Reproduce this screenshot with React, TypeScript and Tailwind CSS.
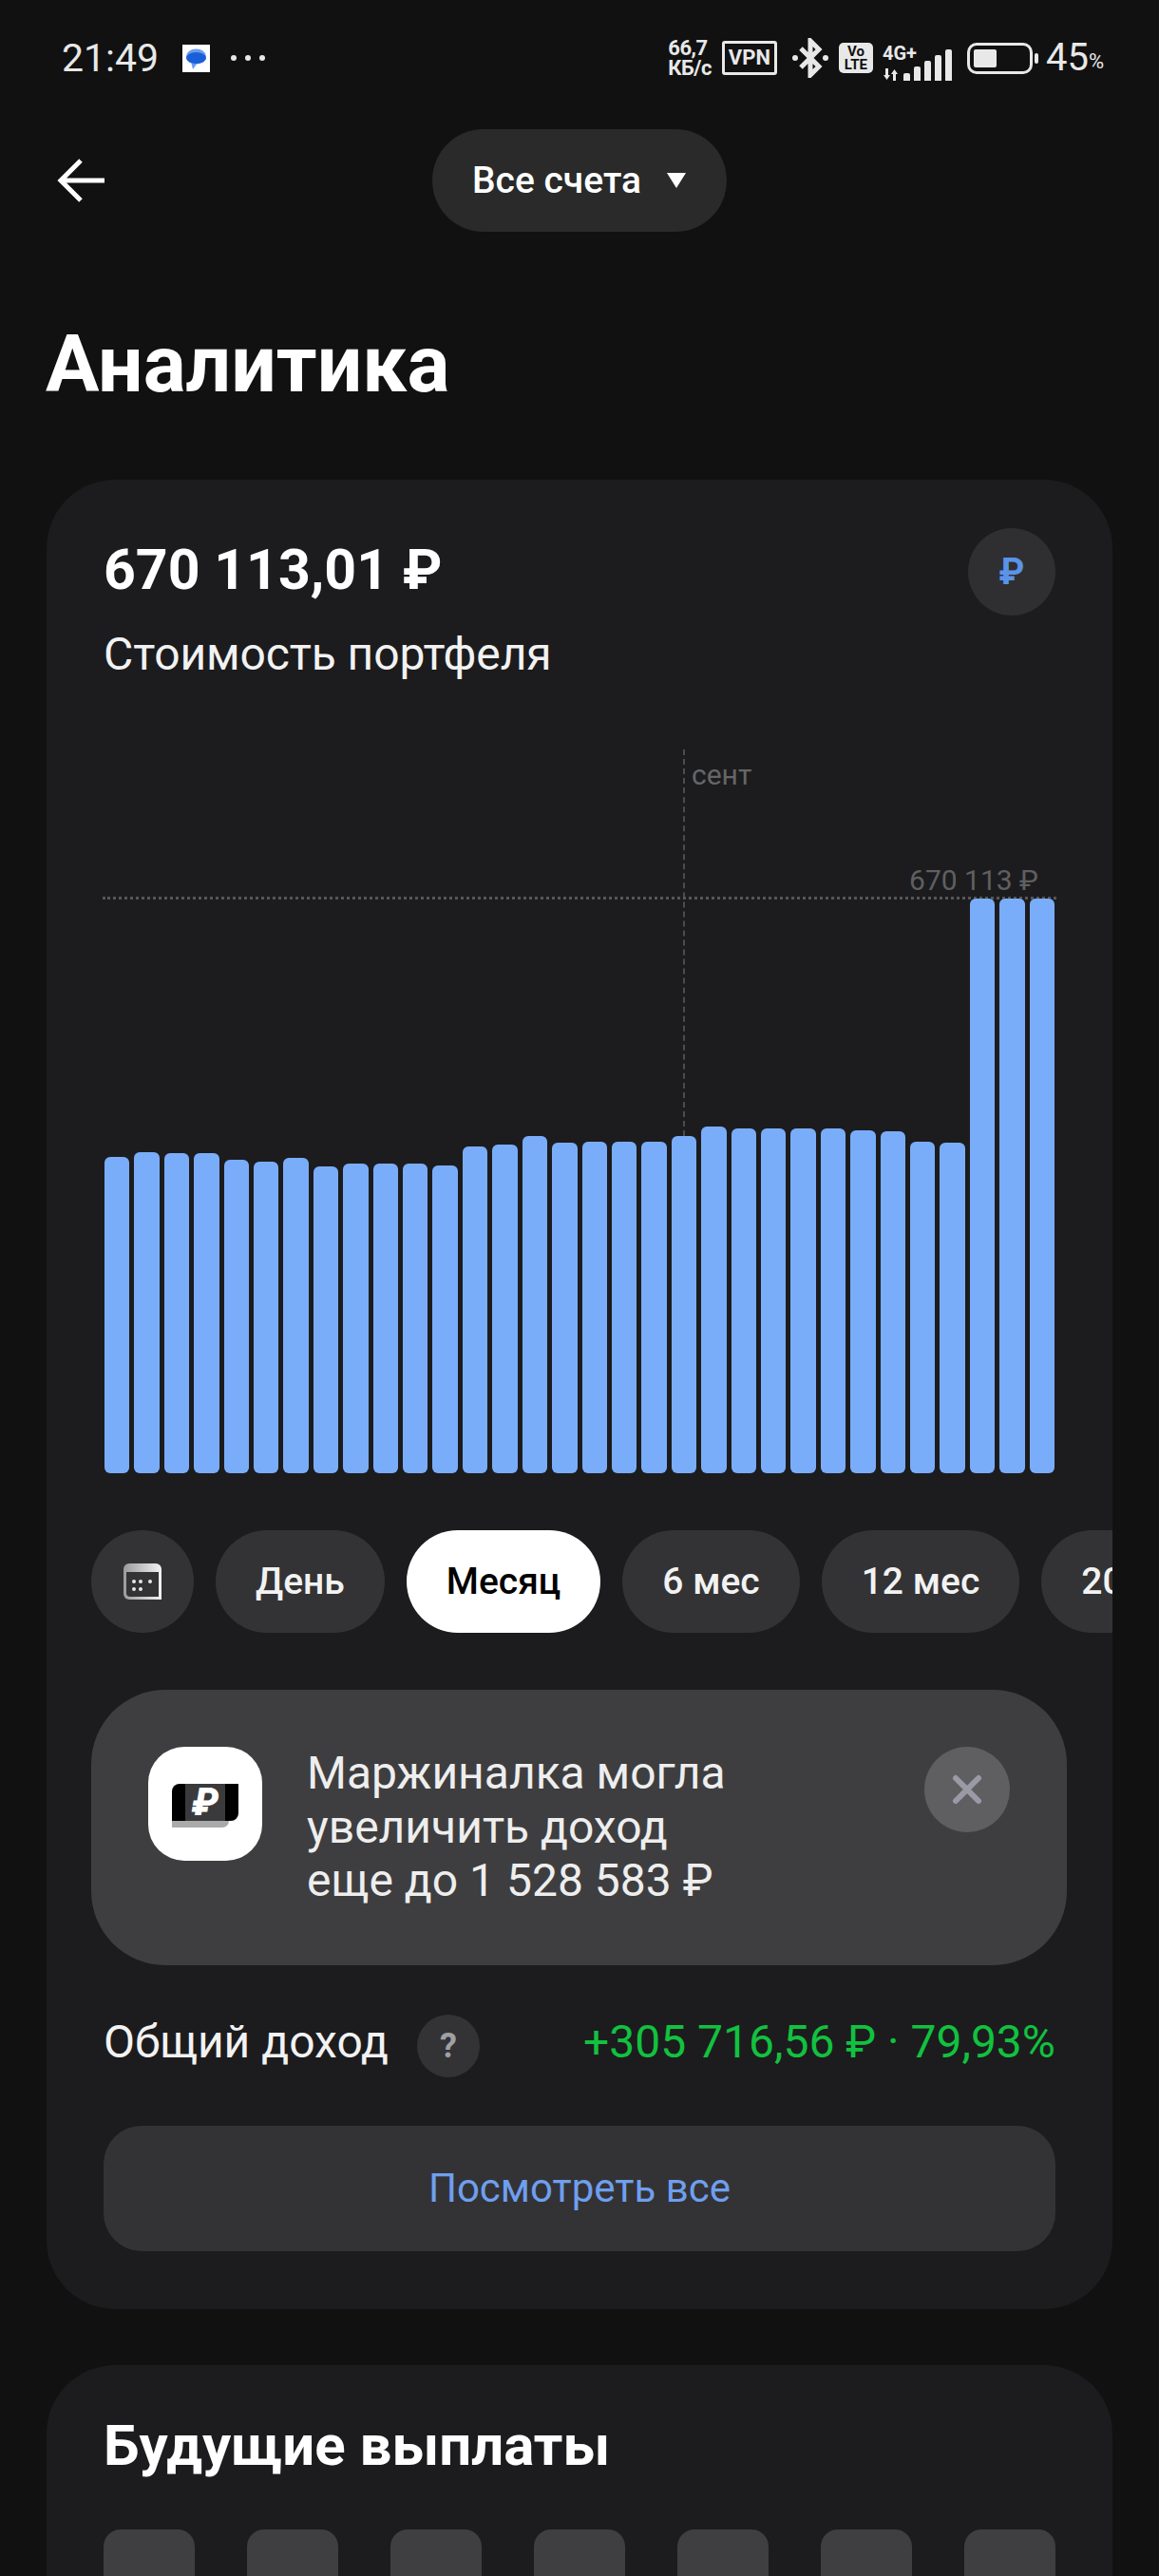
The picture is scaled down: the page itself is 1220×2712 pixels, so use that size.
import React from 'react';

const barTops = [
  1218, 1213, 1214, 1214, 1221, 1223, 1219, 1228, 1225, 1225, 1225, 1227, 1207, 1205, 1196, 1203,
  1202, 1202, 1202, 1196, 1186, 1188, 1188, 1188, 1188, 1190, 1191, 1202, 1203, 946, 946, 946,
];
const chartBottom = 1551;

const periods = ['День', 'Месяц', '6 мес', '12 мес', '2025'];
const payouts = [0, 1, 2, 3, 4, 5, 6];

// Статус-бар
const StatusBar = () => (
  <div className="h-[122px] flex items-center pl-[65px] pr-[58px] text-[#e8e8e8]">
    <span className="text-[41px] leading-none">21:49</span>
    <svg width="29" height="29" viewBox="0 0 29 29" className="ml-[25px]">
      <rect width="29" height="29" fill="#fff" />
      <ellipse cx="14.5" cy="12.5" rx="10.5" ry="8" fill="#6b9cf0" />
      <path d="M9 18l2 8 5-7z" fill="#6b9cf0" />
      <ellipse cx="14.5" cy="14" rx="10.5" ry="6" fill="#1a5fd8" />
    </svg>
    <div className="flex gap-[9px] ml-[22px]">
      <div className="w-[6px] h-[6px] rounded-full bg-[#e8e8e8]" />
      <div className="w-[6px] h-[6px] rounded-full bg-[#e8e8e8]" />
      <div className="w-[6px] h-[6px] rounded-full bg-[#e8e8e8]" />
    </div>
    <div className="ml-auto flex items-center">
      <div className="flex flex-col text-[22px] font-bold leading-[21px] tracking-[-0.5px]">
        <span>66,7</span>
        <span>КБ/с</span>
      </div>
      <div className="ml-[11px] w-[58px] h-[36px] rounded-[3px] border-[3px] border-[#e8e8e8] flex items-center justify-center text-[22px] font-bold leading-none">
        VPN
      </div>
      <svg width="38" height="42" viewBox="0 0 38 42" className="ml-[16px]" fill="none" stroke="#e8e8e8" strokeWidth="5">
        <path d="M9 11l19 19-9 9V3l9 9L9 31" />
        <circle cx="3" cy="21" r="3" fill="#e8e8e8" stroke="none" />
        <circle cx="35" cy="21" r="3" fill="#e8e8e8" stroke="none" />
      </svg>
      <div className="ml-[11px] w-[36px] h-[32px] rounded-[5px] bg-[#e8e8e8] flex flex-col items-center justify-center text-[#111] text-[15px] font-bold leading-[14px]">
        <span>Vo</span>
        <span>LTE</span>
      </div>
      <div className="ml-[10px] relative w-[73px] h-[36px] self-end mb-[-3px]">
        <span className="absolute left-0 top-[-3px] text-[20px] font-bold leading-none">4G+</span>
        <svg width="20" height="13" viewBox="0 0 20 13" className="absolute left-0 bottom-0" fill="#e8e8e8">
          <path d="M3 0h3v7h2l-3.5 5L1 7h2zM14 13h-3V6H9l3.5-5L16 6h-2z" />
        </svg>
        <div className="absolute right-0 bottom-0 flex items-end gap-[4px]">
          <div className="w-[7px] h-[8px] rounded-t-[2px] bg-[#e8e8e8]" />
          <div className="w-[7px] h-[15px] rounded-t-[2px] bg-[#e8e8e8]" />
          <div className="w-[7px] h-[21px] rounded-t-[2px] bg-[#e8e8e8]" />
          <div className="w-[7px] h-[27px] rounded-t-[2px] bg-[#e8e8e8]" />
          <div className="w-[7px] h-[33px] rounded-t-[2px] bg-[#e8e8e8]" />
        </div>
      </div>
      <div className="ml-[16px] w-[69px] h-[33px] rounded-[10px] border-[3px] border-[#e8e8e8] p-[4px]">
        <div className="w-[24px] h-full rounded-[2px] bg-[#e8e8e8]" />
      </div>
      <div className="ml-[2px] w-[4px] h-[11px] rounded-[2px] bg-[#e8e8e8]" />
      <span className="ml-[8px] text-[40px] leading-none">45</span>
      <span className="text-[22px] leading-none self-end mb-[6px]">%</span>
    </div>
  </div>
);

const Nav = () => (
  <div className="mt-[14px] h-[108px] grid grid-cols-[1fr_auto_1fr] items-center">
    <div className="pl-[60px]">
      <svg width="50" height="46" viewBox="0 0 50 46" fill="none" stroke="#fff" strokeWidth="5">
        <path d="M25 2L4 23l21 21M4 23h46" />
      </svg>
    </div>
    <div className="w-[310px] h-[108px] rounded-full bg-[#2a2a2b] flex items-center justify-center gap-[26px]">
      <span className="text-white text-[39px] font-medium leading-none">Все счета</span>
      <svg width="22" height="18" viewBox="0 0 22 18" fill="#fff">
        <path d="M1 1h20L11 17z" />
      </svg>
    </div>
    <div />
  </div>
);

const Chart = () => (
  <div className="relative mx-[61px] mt-[72px] h-[762px]">
    <div className="absolute left-[609px] top-0 bottom-[355px] border-l-2 border-dashed border-[#4c4c4e]" />
    <span className="absolute left-[618px] top-[5px] text-[#666] text-[30px] leading-[44px]">сент</span>
    <span className="absolute right-[17px] top-[119px] text-[#5f5f61] text-[30px] leading-[38px]">670 113 ₽</span>
    <div className="absolute left-[-2px] right-[-2px] top-[155px] border-t-[3px] border-dotted border-[#565658]" />
    <div className="absolute inset-0 flex items-end gap-[5px]">
      {barTops.map((top, i) => (
        <div
          key={i}
          className="flex-1 rounded-[6px] bg-[#7aadf9]"
          style={{ height: chartBottom - top }}
        />
      ))}
    </div>
  </div>
);

const Periods = () => (
  <div className="mt-[60px] pl-[47px] flex gap-[23px] overflow-hidden">
    <div className="w-[108px] h-[108px] shrink-0 rounded-full bg-[#333335] flex items-center justify-center">
      <svg width="40" height="38" viewBox="0 0 40 38">
        <defs>
          <linearGradient id="calTop" x1="0" x2="1" y1="0" y2="0">
            <stop offset="0" stopColor="#9a9a9a" />
            <stop offset="1" stopColor="#f2f2f2" />
          </linearGradient>
        </defs>
        <path d="M6 0h28a6 6 0 0 1 6 6v32H6a6 6 0 0 1-6-6V6a6 6 0 0 1 6-6z" fill="url(#calTop)" />
        <path d="M3 9h34v26H7a4 4 0 0 1-4-4z" fill="#333335" />
        <g fill="#e8e8e8">
          <circle cx="11" cy="19" r="2" />
          <circle cx="18" cy="19" r="2" />
          <circle cx="28" cy="19" r="2" />
          <circle cx="11" cy="27" r="2" />
          <circle cx="18" cy="27" r="2" />
        </g>
      </svg>
    </div>
    {periods.map((p) => (
      <div
        key={p}
        className={`h-[108px] shrink-0 px-[42px] rounded-full flex items-center text-[39px] font-medium leading-none ${p === 'Месяц' ? 'bg-white text-black' : 'bg-[#333335] text-[#f2f2f2]'}`}
      >
        {p}
      </div>
    ))}
  </div>
);

const Banner = () => (
  <div className="mt-[60px] ml-[47px] mr-[48px] h-[290px] rounded-[78px] bg-[#3e3e40] flex pl-[60px] pr-[60px] pt-[60px]">
    <svg width="120" height="120" viewBox="0 0 120 120" className="shrink-0">
      <rect width="120" height="120" rx="38" fill="#fff" />
      <path d="M25 70h60v8a7 7 0 0 1-7 7H25z" fill="#aaa" />
      <path d="M33 39h62v31a8 8 0 0 1-8 8H25V47a8 8 0 0 1 8-8z" fill="#000" />
      <rect x="39" y="39" width="42" height="39" fill="#3a3a3c" />
      <text x="60" y="72" textAnchor="middle" fill="#fff" fontSize="40" fontWeight="900" fontStyle="italic" fontFamily="Roboto">₽</text>
    </svg>
    <div className="ml-[47px] flex-1 text-[48px] leading-[56.5px] text-[#eeeeee]">
      <div>Маржиналка могла</div>
      <div>увеличить доход</div>
      <div>еще до 1 528 583 ₽</div>
    </div>
    <div className="w-[90px] h-[90px] shrink-0 rounded-full bg-[#5f5f61] flex items-center justify-center">
      <svg width="32" height="32" viewBox="0 0 32 32" stroke="#9a9aa6" strokeWidth="6" strokeLinecap="round">
        <path d="M4 4l24 24M28 4L4 28" />
      </svg>
    </div>
  </div>
);

export default function App() {
  return (
    <div className="w-[1220px] h-[2712px] overflow-hidden bg-[#111112] font-['Roboto',sans-serif]">
      <StatusBar />
      <Nav />
      <h1 className="mt-[95px] ml-[48px] text-white text-[84px] font-bold leading-[90px]">Аналитика</h1>
      <div className="mt-[76px] mx-[49px] h-[1926px] rounded-[72px] bg-[#1c1c1e] overflow-hidden">
        <div className="pt-[61px] pl-[60px] pr-[60px] flex justify-between">
          <div>
            <div className="text-white text-[59px] font-bold leading-[70px] mt-[-1px]">670 113,01 ₽</div>
            <div className="mt-[26px] text-[#f2f2f2] text-[48px] tracking-[-0.1px] leading-[56px]">Стоимость портфеля</div>
          </div>
          <div className="mt-[-10px] w-[92px] h-[92px] rounded-full bg-[#2f2f31] flex items-center justify-center text-[#5b93e8] text-[38px] font-bold leading-none">
            ₽
          </div>
        </div>
        <Chart />
        <Periods />
        <Banner />
        <div className="mt-[48px] px-[60px] h-[66px] flex items-center">
          <span className="text-[#f2f2f2] text-[48px] leading-none">Общий доход</span>
          <div className="ml-[30px] mt-[7px] w-[66px] h-[66px] rounded-full bg-[#333335] flex items-center justify-center text-[#a0a0a4] text-[36px] font-bold leading-none">
            ?
          </div>
          <span className="ml-auto text-[#12c13f] text-[48px] leading-none">+305 716,56 ₽ · 79,93%</span>
        </div>
        <div className="mt-[55px] mx-[60px] h-[132px] rounded-[40px] bg-[#333335] flex items-center justify-center text-[#6f9fee] text-[42px] leading-none">
          Посмотреть все
        </div>
      </div>
      <div className="mt-[59px] mx-[49px] h-[400px] rounded-[72px] bg-[#1c1c1e] px-[60px] pt-[50px]">
        <h2 className="text-white text-[60px] font-bold leading-[70px]">Будущие выплаты</h2>
        <div className="mt-[53px] flex justify-between">
          {payouts.map((p) => (
            <div key={p} className="w-[96px] h-[120px] rounded-[18px] bg-[#3f3f41]" />
          ))}
        </div>
      </div>
    </div>
  );
}
